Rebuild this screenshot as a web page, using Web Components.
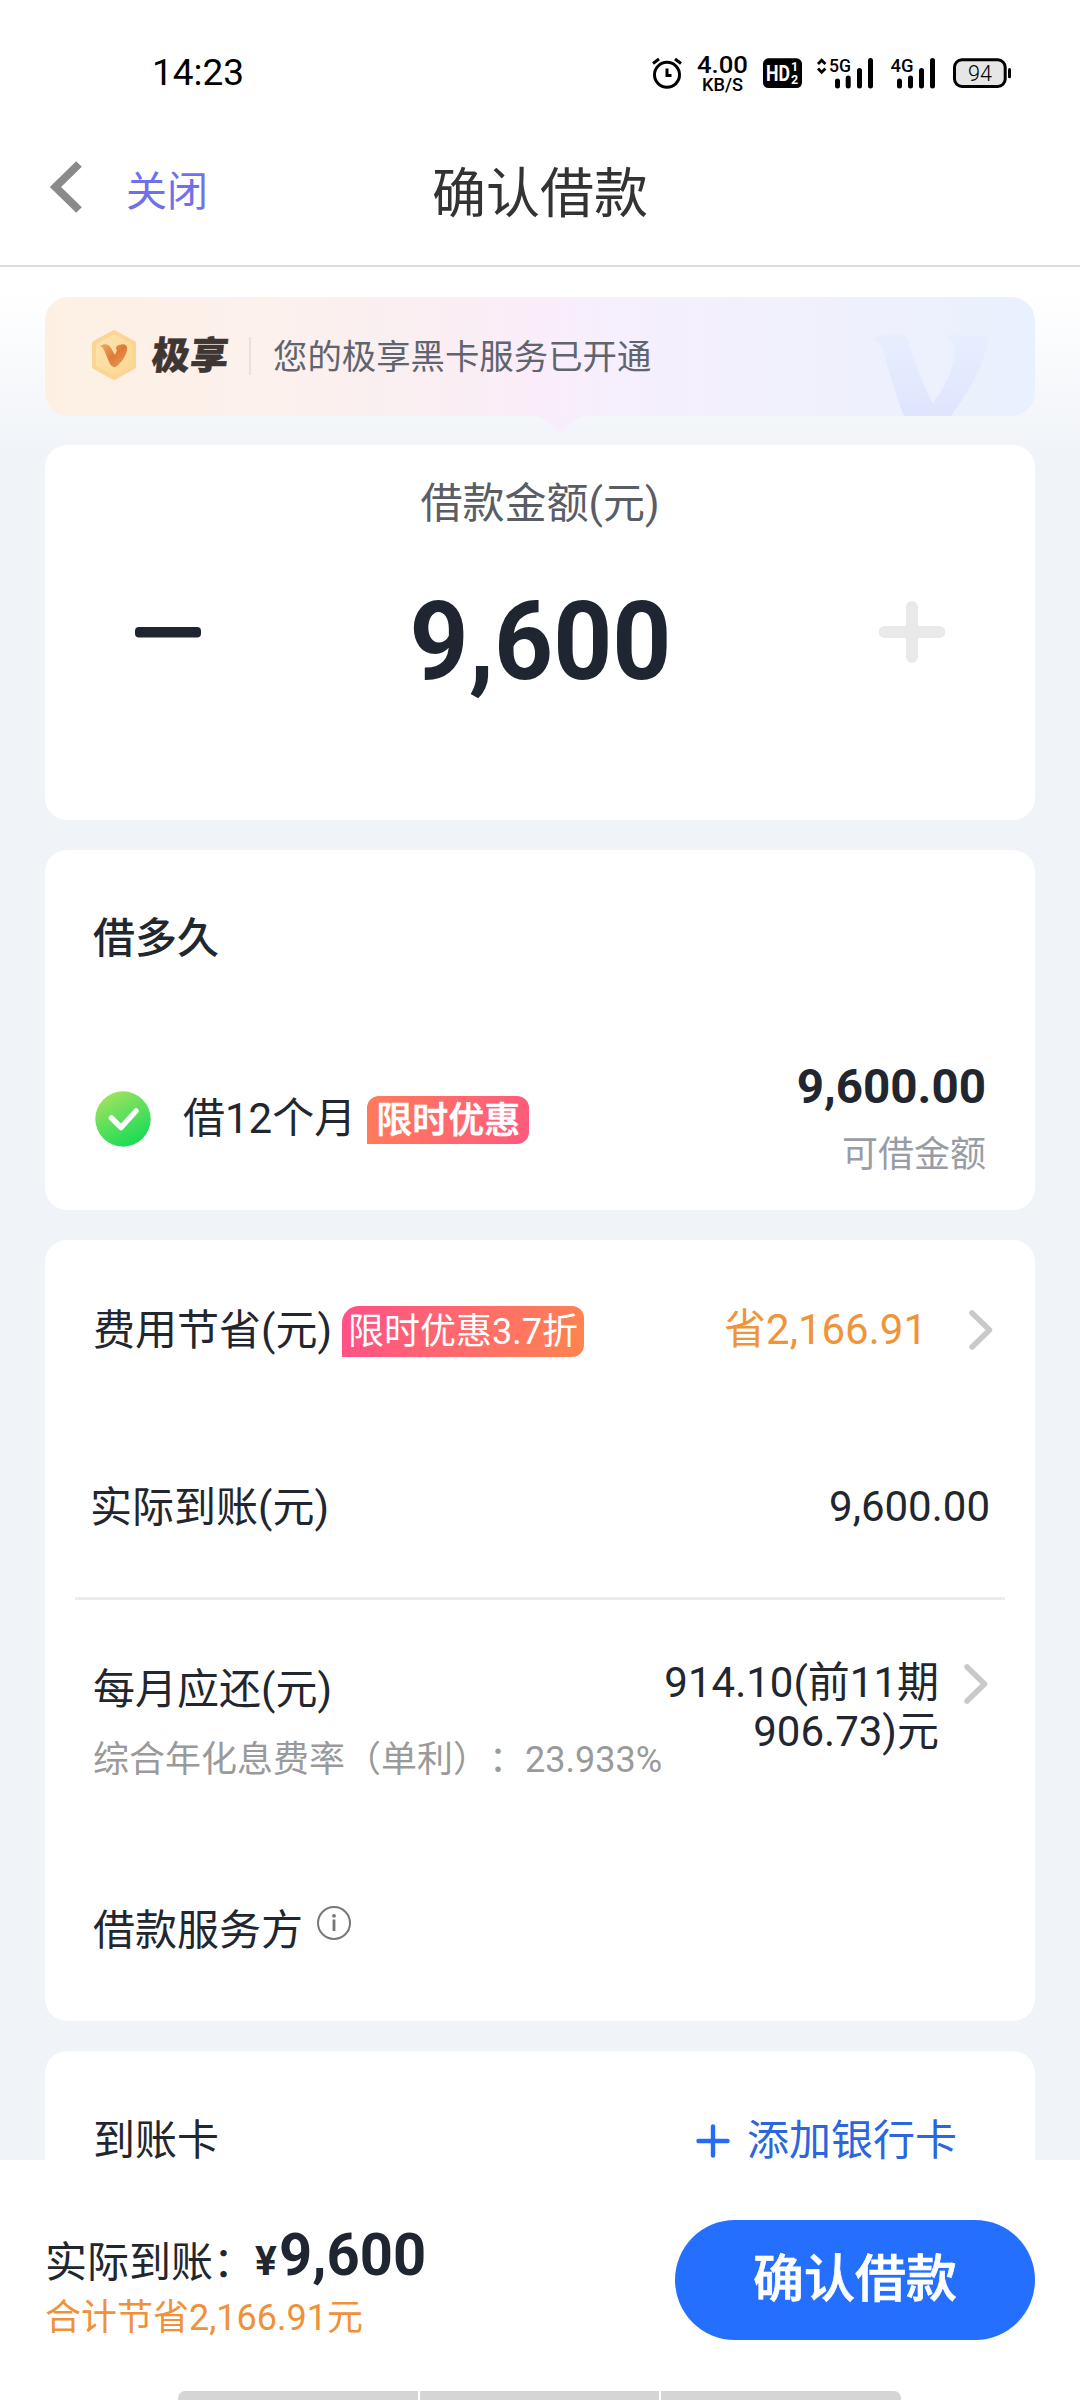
<!DOCTYPE html>
<html lang="zh-CN">
<head>
<meta charset="utf-8">
<title>确认借款</title>
<style>
html, body { margin: 0; padding: 0; }
body { width: 1080px; height: 2400px; overflow: hidden; background: #fff; color: #22262f;
  font-family: Roboto, "Noto Sans CJK SC", sans-serif; font-size: 42px; line-height: 50px; }
</style>
</head>
<body>
<loan-screen></loan-screen>
<script>
function define(name, html) {
  const template = document.createElement('template');
  template.innerHTML = html;
  customElements.define(name, class extends HTMLElement {
    constructor() {
      super();
      this.attachShadow({ mode: 'open' }).appendChild(template.content.cloneNode(true));
    }
  });
}

define('status-bar', `
<style>
:host { display: flex; height: 146px; box-sizing: border-box; padding: 48px 69px 50px 152px; justify-content: space-between; align-items: center; color: #000; }
.time { font-size: 37px; line-height: 48px; padding-top: 1px; }
svg { display: block; margin-top: 1px; }
text { font-family: Roboto, sans-serif; }
</style>
<span class="time">14:23</span>
<svg width="364" height="48" viewBox="647 48 364 48">
  <g fill="none" stroke="#000" stroke-width="3">
    <circle cx="667" cy="73.8" r="12.5"/>
    <path d="M667 67.500V74.500H671.500M653 62.500L659 58M681 62.500L675 58"/>
  </g>
  <text x="697" y="71.500" font-size="24.500" font-weight="500" textLength="51" lengthAdjust="spacingAndGlyphs">4.00</text>
  <text x="702" y="90" font-size="17.500" font-weight="500" textLength="41" lengthAdjust="spacingAndGlyphs">KB/S</text>
  <rect x="763" y="57.300" width="39" height="29.700" rx="5.500"/>
  <g fill="#fff" font-weight="700">
    <text x="766" y="80" font-size="22" textLength="24" lengthAdjust="spacingAndGlyphs">HD</text>
    <text x="791" y="70" font-size="12.500">1</text>
    <text x="791" y="82.500" font-size="12.500">2</text>
  </g>
  <path d="M818 63L821.700 59.300L825.400 63M818 67.500L821.700 71.200L825.400 67.500" fill="none" stroke="#000" stroke-width="2.800"/>
  <text x="829" y="71.300" font-size="19" font-weight="500" textLength="22" lengthAdjust="spacingAndGlyphs">5G</text>
  <text x="890.500" y="71.300" font-size="19" font-weight="500" textLength="23" lengthAdjust="spacingAndGlyphs">4G</text>
  <path d="M837.500 80V85M848.200 77V85M859.500 69.500V85M870.500 59.500V85M899.500 80V85M910.500 77V85M921.500 69.500V85M932.500 59.500V85" stroke="#000" stroke-width="5" stroke-linecap="round"/>
  <rect x="954.500" y="58.800" width="50.700" height="26.700" rx="7.500" fill="#e6e6e6" stroke="#000" stroke-width="3"/>
  <rect x="1008" y="67" width="3" height="10.300" rx="1.500"/>
  <text x="968" y="80" font-size="22" font-weight="300" textLength="24" lengthAdjust="spacingAndGlyphs">94</text>
</svg>`);

define('nav-header', `
<style>
:host { display: grid; grid-template-columns: 1fr auto 1fr; align-items: center; height: 121px; box-sizing: border-box; padding: 0 46px 28px; border-bottom: 2px solid #dcdcdc; }
.left { display: flex; align-items: center; gap: 43px; color: #7070ea; font-size: 41px; }
.left svg { margin-bottom: 10px; }
h1 { margin: 6px 0 0; font-size: 54px; line-height: 64px; font-weight: 400; color: #333; }
</style>
<div class="left">
  <svg width="37" height="54" viewBox="46 160 37 54"><path d="M79 164L55.500 187L79 210" fill="none" stroke="#8a8a8a" stroke-width="8"/></svg>
  <span>关闭</span>
</div>
<h1>确认借款</h1><span></span>`);

define('promo-banner', `
<style>
:host { display: flex; position: relative; align-items: center; height: 119px; padding-left: 45px; box-sizing: border-box; border-radius: 24px;
  background: linear-gradient(90deg, #fdf0e3 0, #fcf1ec 22%, #faeff1 36%, #faedfa 50%, #f6effd 58%, #f2f0fd 72%, #eef0fd 88%, #e9f0fe 100%); color: #60646f; }
.gem { margin: -3px 14px 0 0; }
.brand { font-size: 38px; line-height: 50px; font-weight: 900; color: #3f3532; transform: skewX(-6deg); letter-spacing: .5px; margin-top: -1px; -webkit-text-stroke: .6px #3f3532; }
.bar { width: 2px; height: 38px; background: #e9e0e3; margin: 0 22px 2px 20px; }
.msg { font-size: 34.400px; line-height: 44px; padding-top: 1px; }
.mark { position: absolute; right: 47px; bottom: 0; }
.tip { position: absolute; left: 490px; top: 119px; }
</style>
<svg class="gem" width="48" height="54" viewBox="90 328 48 54">
  <defs><linearGradient id="v" x1="0" y1="0" x2="1" y2="1"><stop offset="0" stop-color="#edab68"/><stop offset=".5" stop-color="#df7b36"/><stop offset="1" stop-color="#e89c5d"/></linearGradient>
  <linearGradient id="h" x1="0" y1="0" x2="1" y2="1"><stop offset="0" stop-color="#f2c685"/><stop offset=".2" stop-color="#fde2ad"/><stop offset="1" stop-color="#fbd58e"/></linearGradient></defs>
  <path d="M114 332L134 343V367L114 378L94 367V343Z" fill="url(#h)" stroke="#fad596" stroke-width="4" stroke-linejoin="round"/>
  <path d="M100 346C105 343 109 344 111 348L115 355L117 350C115 348 116 346 119 345C124 343 128 345 127 350C126 356 121 363 117 366Q113 369 110 364L104 350Q103 347 100 346Z" fill="url(#v)"/>
</svg>
<span class="brand">极享</span><span class="bar"></span><span class="msg">您的极享黑卡服务已开通</span>
<svg class="mark" width="116" height="83" viewBox="872 333 116 83">
  <defs><linearGradient id="m" x1="0" y1="0" x2="0" y2="1"><stop offset="0" stop-color="#e7effe"/><stop offset=".4" stop-color="#e4ebfe"/><stop offset="1" stop-color="#dfe4fd"/></linearGradient></defs>
  <path d="M872 338C884 333 902 332 908 338C913 360 922 382 932.500 403C945 387 955 370 955 345C951 341 948 338 947 335H988C987 365 965 396 951 416H904C896 397 890 374 883 351Q880 343 872 338Z" fill="url(#m)"/>
</svg>
<svg class="tip" width="50" height="16" viewBox="0 0 50 16"><path d="M0 0H50Q42 1 36 7L29 14Q25 16 21 14L14 7Q8 1 0 0Z" fill="#f8eefa"/></svg>`);

define('panel-card', `
<style>:host { display: flex; flex-direction: column; box-sizing: border-box; background: #fff; border-radius: 22px; }</style>
<slot></slot>`);

define('amount-stepper', `
<style>
:host { display: flex; flex-direction: column; align-items: center; height: 375px; box-sizing: border-box; padding-top: 34px; }
.label { color: #5a5d64; }
.row { align-self: stretch; display: flex; justify-content: space-between; align-items: center; height: 130px; margin-top: 48px; padding: 0 90px; }
.num { font-size: 109px; line-height: 130px; font-weight: 700; color: #202631; transform: scaleX(.945); }
svg { display: block; margin-top: -20px; }
</style>
<span class="label">借款金额(元)</span>
<div class="row">
  <svg width="66" height="62"><rect x="0" y="26" width="66" height="10.500" rx="4" fill="#202631"/></svg>
  <span class="num">9,600</span>
  <svg width="66" height="62"><path d="M5.500 31H60.500M33 6V56" stroke="#e9e9ea" stroke-width="12" stroke-linecap="round"/></svg>
</div>`);

define('promo-tag', `
<style>
:host { display: inline-flex; align-items: center; justify-content: center; box-sizing: border-box; height: 48px; width: 162px; padding-top: 1px; border-radius: 12px 12px 12px 0; background: linear-gradient(100deg, #ff7b59, #ff5a7e); color: #fff; font-size: 36px; line-height: 46px; font-weight: 500; white-space: nowrap; -webkit-text-stroke: .6px #fff; }
:host([wide]) { width: 242px; height: 51px; padding-top: 0; border-radius: 17px 12px 12px 0; font-weight: 400; background: linear-gradient(105deg, #ff5088, #ff8450); -webkit-text-stroke: 0; }
</style><slot></slot>`);

define('term-option', `
<style>
:host { display: flex; flex-direction: column; height: 360px; box-sizing: border-box; padding: 64px 49px 0 50px; }
.title { font-weight: 500; margin-left: -2px; }
.row { display: flex; align-items: center; height: 112px; margin-top: 98px; }
.row > svg { margin-top: 2px; }
.term { margin-left: 32px; padding-top: 1px; }
promo-tag { margin-left: 11px; margin-top: 4px; }
.right { margin-left: auto; display: flex; flex-direction: column; align-items: flex-end; }
.amt { font-weight: 700; font-size: 47.600px; line-height: 56px; }
.hint { color: #989ca6; font-size: 36px; line-height: 44px; margin-top: 18px; }
</style>
<span class="title">借多久</span>
<div class="row">
  <svg width="56" height="56" viewBox="0 0 56 56"><defs><linearGradient id="g" x1=".2" y1="0" x2=".75" y2="1"><stop offset="0" stop-color="#a5e362"/><stop offset="1" stop-color="#10dc54"/></linearGradient></defs>
    <circle cx="28" cy="28" r="27.700" fill="url(#g)"/><path d="M16.500 27L26 36.500L41 20" fill="none" stroke="#fff" stroke-width="5.500" stroke-linecap="round" stroke-linejoin="round"/></svg>
  <span class="term">借12个月</span><promo-tag>限时优惠</promo-tag>
  <div class="right"><span class="amt">9,600.00</span><span class="hint">可借金额</span></div>
</div>`);

define('chevron-right', `
<style>:host { display: block; flex: none; width: 26px; height: 44px; } svg { display: block; }</style>
<svg width="26" height="44"><path d="M4 5L21.500 22L4 39" fill="none" stroke="#c9c9c9" stroke-width="5.500" stroke-linecap="round" stroke-linejoin="round"/></svg>`);

define('fee-details', `
<style>
:host { display: flex; flex-direction: column; height: 781px; box-sizing: border-box; padding-top: 63px; }
.row { display: flex; align-items: center; height: 56px; padding: 0 41px 0 48px; }
promo-tag { margin-left: 10px; margin-top: 1px; }
.save { margin-left: auto; color: #f0943a; margin-top: -3px; }
.save + chevron-right { margin-left: 41px; margin-top: -3px; }
.got { margin-top: 121px; padding: 0 45px 0 45px; justify-content: space-between; }
.got span:last-child { margin-top: -2px; }
hr { border: 0; height: 3px; width: 930px; margin: 61px 0 0 30px; background: #ececec; }
.month { margin-top: 59px; height: auto; align-items: flex-start; padding-right: 46px; }
.left { display: flex; flex-direction: column; padding-top: 6px; white-space: nowrap; }
.sub { font-size: 36px; line-height: 40px; color: #9a9a9a; margin-top: 25px; text-spacing-trim: space-all; }
.pay { margin-left: auto; text-align: right; line-height: 48.500px; white-space: nowrap; }
.month .left { width: 480px; }
.month chevron-right { margin: 3px 0 0 23px; }
.month .pay { margin-right: 1px; }
.party { margin-top: 126px; height: 50px; }
.party svg { margin: -16px 0 0 13px; }
</style>
<div class="row"><span>费用节省(元)</span><promo-tag wide>限时优惠3.7折</promo-tag><span class="save">省2,166.91</span><chevron-right></chevron-right></div>
<div class="row got"><span>实际到账(元)</span><span>9,600.00</span></div>
<hr>
<div class="row month">
  <div class="left"><span>每月应还(元)</span><span class="sub">综合年化息费率（单利）：23.933%</span></div>
  <div class="pay">914.10(前11期<br>906.73)元</div><chevron-right></chevron-right>
</div>
<div class="row party"><span>借款服务方</span>
  <svg width="36" height="36"><circle cx="18" cy="18" r="16" fill="none" stroke="#77777a" stroke-width="2"/><path d="M18 14.500V26" stroke="#77777a" stroke-width="2.800"/><circle cx="18" cy="10.800" r="1.900" fill="#77777a"/></svg>
</div>`);

define('card-picker', `
<style>
:host { display: flex; height: 180px; box-sizing: border-box; padding: 65px 78px 0 48px; justify-content: space-between; align-items: flex-start; }
.add { display: flex; align-items: center; gap: 17px; color: #2b66df; }
svg { display: block; }
</style>
<span>到账卡</span>
<div class="add"><svg width="34" height="36"><path d="M2.500 18H31.500M17 3.500V32.500" stroke="#256bf5" stroke-width="4.400" stroke-linecap="round"/></svg><span>添加银行卡</span></div>`);

define('confirm-footer', `
<style>
:host { display: flex; flex-direction: column; height: 240px; box-sizing: border-box; background: #fff; overflow: hidden; }
.bar { display: flex; flex: none; justify-content: space-between; align-items: flex-start; padding: 60px 45px 0 45px; height: 231px; box-sizing: border-box; }
.line { display: flex; height: 50px; margin-top: 18px; }
.yen { font-size: 40px; font-weight: 700; width: 24px; margin-top: -1px; transform-origin: left; transform: scaleX(1.02); }
.num { font-size: 60px; font-weight: 700; color: #202631; margin-top: -8px; transform: scaleX(.965); transform-origin: left; }
.save { color: #f0913a; font-size: 36px; line-height: 44px; margin-top: 8px; }
button { border: 0; margin: 0; padding: 0; width: 360px; height: 120px; border-radius: 60px; background: #256fff; color: #fff; font: 500 51px/60px Roboto, "Noto Sans CJK SC", sans-serif; -webkit-text-stroke: .7px #fff; }
.home { display: flex; gap: 2px; width: 723px; height: 18px; flex: none; margin-left: 178px; border-radius: 7px; overflow: hidden; }
.home i { flex: 1; background: #d5d5d5; }
</style>
<div class="bar">
  <div><div class="line"><span>实际到账：</span><span class="yen">¥</span><span class="num">9,600</span></div>
  <div class="save">合计节省2,166.91元</div></div>
  <button>确认借款</button>
</div>
<div class="home"><i></i><i></i><i></i></div>`);

define('loan-screen', `
<style>
:host { display: flex; flex-direction: column; width: 1080px; height: 2400px; overflow: hidden; background: #fff; }
main { height: 1893px; flex: none; overflow: hidden; box-sizing: border-box; padding: 30px 45px 0; display: flex; flex-direction: column; gap: 30px; background: linear-gradient(#fff 0, #fff 25px, #f0f3f8 190px); }
main > * { flex: none; }
promo-banner { margin-bottom: -1px; }
</style>
<status-bar></status-bar>
<nav-header></nav-header>
<main>
  <promo-banner></promo-banner>
  <panel-card><amount-stepper></amount-stepper></panel-card>
  <panel-card><term-option></term-option></panel-card>
  <panel-card><fee-details></fee-details></panel-card>
  <panel-card><card-picker></card-picker></panel-card>
</main>
<confirm-footer></confirm-footer>`);
</script>
</body>
</html>
